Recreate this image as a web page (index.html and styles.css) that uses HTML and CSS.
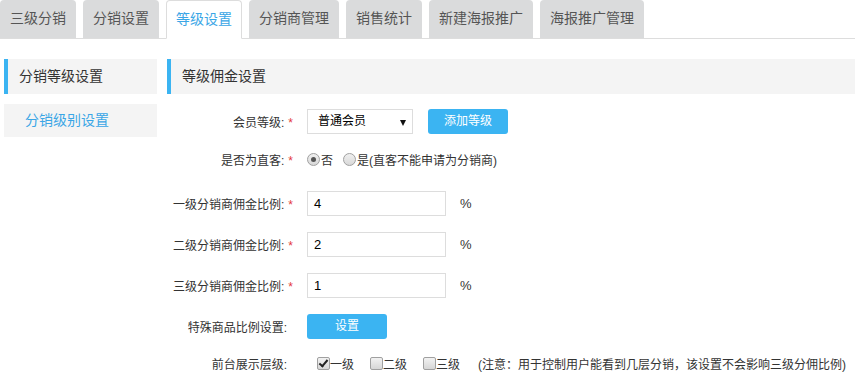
FILE: index.html
```html
<html>
<head>
  <meta http-equiv="Content-Type" content="text/html; charset=UTF-8"/>
  <title>等级设置</title>
  <link rel="stylesheet" href="styles.css">
</head>

<body>
<ul class="tabs">
  <li>三级分销</li>
  <li>分销设置</li>
  <li class="active">等级设置</li>
  <li>分销商管理</li>
  <li>销售统计</li>
  <li>新建海报推广</li>
  <li>海报推广管理</li>
</ul>

<div class="page">
  <div class="side">
    <div class="head">分销等级设置</div>
    <div class="item">分销级别设置</div>
  </div>

  <div class="main">
    <div class="head">等级佣金设置</div>

    <div class="row r1">
      <label class="lbl">会员等级:<span class="req">*</span></label>
      <div class="select">普通会员<i class="arrow"></i></div>
      <a class="btn add">添加等级</a>
    </div>

    <div class="row r2">
      <label class="lbl">是否为直客:<span class="req">*</span></label>
      <span class="radio on"></span><span class="opt">否</span>
      <span class="radio"></span><span class="opt">是(直客不能申请为分销商)</span>
    </div>

    <div class="row r3">
      <label class="lbl">一级分销商佣金比例:<span class="req">*</span></label>
      <div class="input">4</div>
      <span class="pct">%</span>
    </div>

    <div class="row">
      <label class="lbl">二级分销商佣金比例:<span class="req">*</span></label>
      <div class="input">2</div>
      <span class="pct">%</span>
    </div>

    <div class="row">
      <label class="lbl">三级分销商佣金比例:<span class="req">*</span></label>
      <div class="input">1</div>
      <span class="pct">%</span>
    </div>

    <div class="row r6">
      <label class="lbl plain">特殊商品比例设置:</label>
      <a class="btn">设置</a>
    </div>

    <div class="row r7">
      <label class="lbl plain">前台展示层级:</label>
      <div class="checks">
        <span class="check on"></span><span class="opt">一级</span>
        <span class="check"></span><span class="opt">二级</span>
        <span class="check"></span><span class="opt">三级</span>
        <span class="note">(注意：用于控制用户能看到几层分销，该设置不会影响三级分佣比例)</span>
      </div>
    </div>
  </div>
</div>
</body>
</html>
```

FILE: styles.css
```css
body {margin: 0; font: 12px "Liberation Sans", "Noto Sans CJK SC", sans-serif; color: #333; background: #fff}

ul.tabs {display: flex; margin: 0; padding: 0; list-style: none; height: 38px; border-bottom: 1px solid #ddd}
ul.tabs li {height: 38px; line-height: 37px; padding: 0 10px; margin-right: 7px; background: #dadbdc; border-radius: 4px 4px 0 0; font-size: 14px; color: #555; box-sizing: border-box}
ul.tabs li.active {background: #fff; color: #3aa6e6; border: 1px solid #ddd; border-bottom: 1px solid #fff; height: 39px; padding: 0 9px}

div.page {display: flex; padding: 20px 0 0 4px; gap: 10px}
div.side {width: 153px; flex: none}
div.main {flex: 1; min-width: 0}

div.head {height: 35px; line-height: 35px; background: #f4f4f4; border-left: 4px solid #3bb4f2; padding-left: 11px; font-size: 14px; color: #333}
div.item {margin-top: 10px; height: 33px; line-height: 33px; background: #f4f4f4; padding-left: 21px; font-size: 14px; color: #3aa6e6}

div.row {display: flex; align-items: center; height: 25px; margin-top: 16px; white-space: nowrap}
div.row.r1 {margin-top: 15px}
div.row.r2 {margin-top: 13px}
div.row.r3 {margin-top: 19px}
div.row.r6 {margin-top: 16px}
div.row.r7 {margin-top: 12px}

label.lbl {width: 126px; text-align: right; margin-right: 14px; flex: none; color: #333}
label.plain {padding-right: 6px; width: 120px}
span.req {color: #e4393c; margin-left: 4px}

div.select {width: 106px; height: 25px; box-sizing: border-box; border: 1px solid #ddd; padding-left: 10px; line-height: 23px; font-size: 12px; color: #000; position: relative}
i.arrow {position: absolute; right: 6px; top: 10px; width: 0; height: 0; border-left: 3px solid transparent; border-right: 3px solid transparent; border-top: 6px solid #111}

a.btn {display: inline-block; width: 80px; height: 25px; line-height: 25px; text-align: center; background: #3bb4f2; color: #fff; border-radius: 3px; font-size: 12px}
a.add {margin-left: 15px}

span.radio {width: 11px; height: 11px; border: 1px solid #a0a0a0; border-radius: 50%; background: linear-gradient(#f0f0f0, #d8d8d8); flex: none; position: relative}
span.radio.on::after {content: ""; position: absolute; left: 3px; top: 3px; width: 5px; height: 5px; border-radius: 50%; background: #555}
span.opt {margin-right: 10px; flex: none}
span.radio + span.opt {margin-left: 1px}

div.input {width: 139px; height: 25px; box-sizing: border-box; border: 1px solid #ddd; padding-left: 6px; font: 13px "Liberation Sans", sans-serif; line-height: 23px; color: #000}
span.pct {margin-left: 14px; font-size: 13px; color: #333}

div.checks {display: flex; align-items: center; padding-left: 10px; flex: none}
span.check {width: 11px; height: 11px; border: 1px solid #a0a0a0; border-radius: 2px; background: linear-gradient(#f2f2f2, #d6d6d6); flex: none; position: relative}
span.check.on::after {content: ""; position: absolute; left: 3px; top: 0; width: 3px; height: 7px; border: solid #222; border-width: 0 2px 2px 0; transform: rotate(40deg)}
div.checks span.opt {margin-right: 16px}
span.note {margin-left: 2px; font-size: 12px; color: #333; flex: none}
```
